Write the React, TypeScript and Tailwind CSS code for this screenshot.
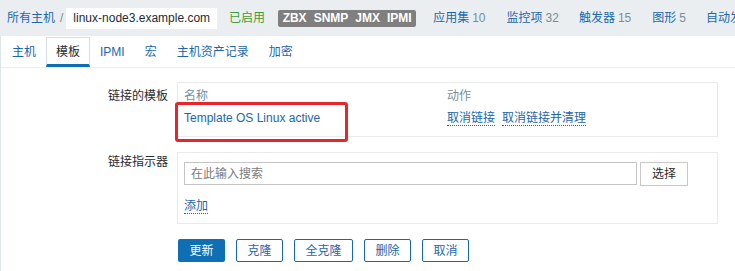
import React from "react";

const font = { fontFamily: '"Liberation Sans", Arial, "Noto Sans CJK SC", sans-serif' };

export default function App() {
  const link = "text-[#1b67ad]";
  return (
    <div style={font} className="w-[735px] h-[271px] overflow-hidden bg-white text-[12px] text-[#1f2c33] relative">
      {/* top bar */}
      <div className="h-[36px] bg-[#ebeef0] flex items-center pl-[7px] whitespace-nowrap leading-[16px] overflow-hidden">
        <span className={link}>所有主机</span>
        <span className="text-[#768d99] ml-[5px]">/</span>
        <span className="ml-[3px] bg-white h-[21px] flex items-center px-[7px] text-[#1f2c33]">linux-node3.example.com</span>
        <span className="ml-[12px] text-[#3f9c3b]">已启用</span>
        <span className="ml-[13px] h-[17px] bg-[#7f7f7f] text-white font-bold flex items-center px-[1px] rounded-[2px]">
          <span className="px-[3.5px]">ZBX</span>
          <span className="px-[3.5px]">SNMP</span>
          <span className="px-[3.5px]">JMX</span>
          <span className="px-[3.5px]">IPMI</span>
        </span>
        <span className="ml-[17px]"><span className={link}>应用集</span><span className="text-[#768d99] ml-[3px]">10</span></span>
        <span className="ml-[21px]"><span className={link}>监控项</span><span className="text-[#768d99] ml-[3px]">32</span></span>
        <span className="ml-[20px]"><span className={link}>触发器</span><span className="text-[#768d99] ml-[3px]">15</span></span>
        <span className="ml-[21px]"><span className={link}>图形</span><span className="text-[#768d99] ml-[3px]">5</span></span>
        <span className="ml-[20px]"><span className={link}>自动发现规则</span></span>
      </div>

      {/* content */}
      <div className="border-l border-[#dfe4e7] h-[235px]">
        {/* tabs */}
        <div className="pt-[1px] pl-[1px] border-b border-[#ebeef0] flex h-[32px] leading-[16px]">
          <div className={`h-[30px] px-[9px] flex items-center border border-transparent ${link}`}>主机</div>
          <div className="h-[30px] px-[9px] flex items-center border-x border-t border-[#d6dfe6] border-b-[3px] border-b-[#0a6fb4] pt-[2px] text-[#1f2c33] bg-white">模板</div>
          <div className={`h-[30px] px-[9px] flex items-center border border-transparent ${link}`}>IPMI</div>
          <div className={`h-[30px] px-[9px] flex items-center border border-transparent ${link}`}>宏</div>
          <div className={`h-[30px] px-[9px] flex items-center border border-transparent ${link}`}>主机资产记录</div>
          <div className={`h-[30px] px-[9px] flex items-center border border-transparent ${link}`}>加密</div>
        </div>

        {/* row 1 */}
        <div className="flex mt-[14px] leading-[16px]">
          <div className="w-[167px] text-right pt-[6px]">链接的模板</div>
          <div className="ml-[9px] w-[541px] border border-[#e8ebed] pt-[2px] pb-[7px] px-[6px]">
            <div className="flex h-[22px] items-center text-[#768d99]">
              <div className="w-[263px]">名称</div>
              <div>动作</div>
            </div>
            <div className="flex h-[22px] items-center">
              <div className={`w-[263px] ${link}`}>Template OS Linux active</div>
              <div className="flex">
                <span className={`leading-[14px] border-b border-dotted border-[#1b67ad] ${link}`}>取消链接</span>
                <span className={`ml-[7px] leading-[14px] border-b border-dotted border-[#1b67ad] ${link}`}>取消链接并清理</span>
              </div>
            </div>
          </div>
        </div>

        {/* row 2 */}
        <div className="flex mt-[15px] leading-[16px]">
          <div className="w-[167px] text-right pt-[2px]">链接指示器</div>
          <div className="ml-[9px] w-[541px] border border-[#e8ebed] pt-[9px] pb-[9px] px-[6px]">
            <div className="flex items-start">
              <div className="w-[453px] h-[23px] border border-[#c4c4c4] flex items-center px-[6px] text-[#7b7b7b]">在此输入搜索</div>
              <div className="ml-[3px] w-[48px] h-[24px] border border-[#c8c8c8] bg-white flex items-center justify-center text-[#2b2b2b]">选择</div>
            </div>
            <div className="mt-[12px]">
              <span className={`inline-block leading-[14px] border-b border-dotted border-[#1b67ad] ${link}`}>添加</span>
            </div>
          </div>
        </div>

        {/* buttons */}
        <div className="flex mt-[15px] ml-[177px] gap-[11px] leading-[16px]">
          <div className="w-[47px] h-[23px] rounded-[2px] bg-[#0f6fb3] text-white flex items-center justify-center">更新</div>
          <div className="w-[47px] h-[23px] rounded-[2px] border border-[#1b67ad] text-[#1b67ad] flex items-center justify-center">克隆</div>
          <div className="w-[59px] h-[23px] rounded-[2px] border border-[#1b67ad] text-[#1b67ad] flex items-center justify-center">全克隆</div>
          <div className="w-[47px] h-[23px] rounded-[2px] border border-[#1b67ad] text-[#1b67ad] flex items-center justify-center">删除</div>
          <div className="w-[47px] h-[23px] rounded-[2px] border border-[#1b67ad] text-[#1b67ad] flex items-center justify-center">取消</div>
        </div>
      </div>

      {/* red annotation */}
      <div className="absolute left-[175px] top-[102px] w-[173px] h-[40px] border-[3px] border-[#e8252a] rounded-[3px] pointer-events-none" />
    </div>
  );
}
